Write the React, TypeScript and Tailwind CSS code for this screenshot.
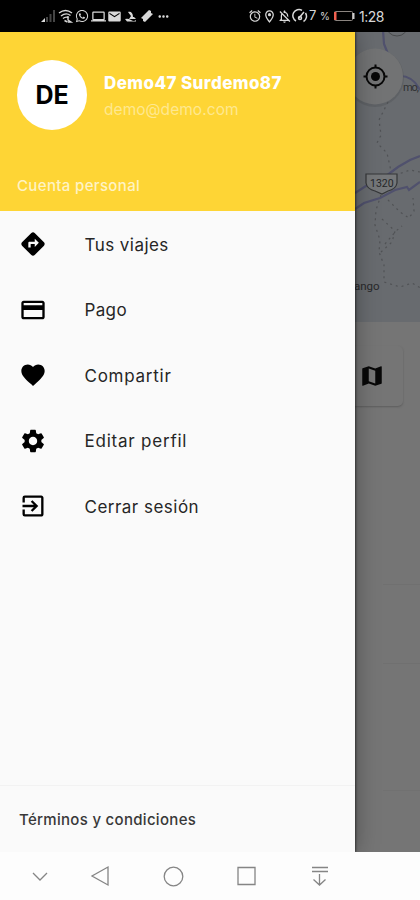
import React from "react";
import {
  MdDirections, MdPayment, MdFavorite, MdSettings, MdExitToApp, MdMap, MdEmail,
  MdAlarm, MdOutlineLocationOn, MdOutlineNotificationsOff, MdLaptop, MdMoreHoriz,
} from "react-icons/md";
import { FaWhatsapp } from "react-icons/fa";

const items = [
  { icon: MdDirections, label: "Tus viajes", tracking: "tracking-[0.45px]" },
  { icon: MdPayment, label: "Pago", tracking: "tracking-[0.35px]" },
  { icon: MdFavorite, label: "Compartir", tracking: "tracking-[0.75px]" },
  { icon: MdSettings, label: "Editar perfil", tracking: "tracking-[0.78px]" },
  { icon: MdExitToApp, label: "Cerrar sesión", tracking: "tracking-[0.48px]" },
];

function StatusBar() {
  return (
    <header className="flex h-8 shrink-0 items-center bg-black pl-[40px] text-[#d8d8d8]">
      <svg className="h-4 w-[16px]" viewBox="0 0 16 16">
        <path d="M1 14l4-4v4z" fill="#ddd" />
        <path d="M6 9h2v5H6zM9.500 6h2v8h-2zM13 2h2v12h-2z" fill="#454545" />
      </svg>
      <svg className="ml-[2px] h-4 w-4" viewBox="0 0 16 16" fill="none" stroke="currentColor" strokeWidth="1.4">
        <path d="M1 5q6.500-5 13 0M3 8q5-4 9.500-.5M5 10.500q3-2.500 6-.5M6.500 12.500l3 1.500M10 8v4l3 2-3 0" />
      </svg>
      <FaWhatsapp className="ml-[1px] size-[14px]" />
      <MdLaptop className="ml-[2px] size-[15px]" />
      <MdEmail className="ml-[1px] size-[15px]" />
      <svg className="ml-[3px] h-4 w-[12px]" viewBox="0 0 12 16" fill="currentColor">
        <path d="M3 4c3-1 5 1 5 5h1l2 2H4l2-3zM0 11q3-1 6 1t5 0v1.500H2z" />
      </svg>
      <svg className="ml-[3px] h-4 w-[14px]" viewBox="0 0 14 16" fill="currentColor">
        <path d="M1 10l8-8 2 1 0 2 2 1-8 8-2-1 0-2z" />
      </svg>
      <MdMoreHoriz className="ml-[2px] size-[15px]" />
      <div className="ml-[77px] flex items-center">
        <MdAlarm className="size-[14px]" />
        <MdOutlineLocationOn className="size-[15px]" />
        <MdOutlineNotificationsOff className="size-[15px]" />
        <svg className="h-4 w-4" viewBox="0 0 16 16" fill="none" stroke="currentColor" strokeWidth="1.500">
          <path d="M4 13A6 6 0 0 1 10 2.300M13.500 5a6 6 0 0 1-2 8.500M7 10l5-6" />
          <circle cx="8" cy="10" r="1.500" />
        </svg>
        <span className="ml-px w-[11px] text-[13px]">7</span>
        <span className="w-[12px] text-[10px]">%</span>
        <svg className="h-3 w-[24px]" viewBox="0 0 24 12">
          <rect x="2.500" y="1.500" width="18" height="9" rx="1" fill="none" stroke="#8b8580" />
          <path d="M2 2h2.500v8H2z" fill="#ef604f" />
          <path d="M21.500 3v6" stroke="#ccc" strokeWidth="2" />
        </svg>
        <span className="ml-[3px] text-[14px] tracking-[-0.5px]">1:28</span>
      </div>
    </header>
  );
}

function Drawer() {
  return (
    <aside className="relative z-10 flex w-[355px] shrink-0 flex-col bg-[#fafafa] shadow-[0_0_22px_rgba(0,0,0,0.35),1px_0_2px_rgba(0,0,0,0.5)]">
      <div className="flex h-[179px] shrink-0 flex-col bg-[#fed535] text-white">
        <div className="flex h-[126px] items-center pl-[17px]">
          <div className="flex size-[70px] items-center justify-center rounded-full bg-white pt-[2px] text-[25px] font-bold text-black">DE</div>
          <div className="ml-[17px] flex flex-col pt-[3px]">
            <span className="text-[17px] leading-[26px] font-extrabold tracking-[0.400px]">Demo47 Surdemo87</span>
            <span className="text-[15.500px] leading-[27px] tracking-[0.050px] text-[#ffe88f]">demo@demo.com</span>
          </div>
        </div>
        <div className="flex h-[53px] items-center pt-[3px] pl-[17px] text-[15px] font-medium tracking-[0.350px] text-[#fff3c4]">Cuenta personal</div>
      </div>
      <nav className="flex flex-1 flex-col pt-[0.500px]">
        {items.map(({ icon: Icon, label, tracking }) => (
          <div key={label} className="flex h-[65.500px] items-center pl-[19px]">
            <Icon className="size-[28px] text-black" />
            <span className={`ml-[37.500px] pt-[2px] text-[17px] text-[#262626] ${tracking}`}>{label}</span>
          </div>
        ))}
      </nav>
      <footer className="flex h-[67px] items-center border-t border-[#f2f2f2] pt-[2px] pl-[19px] text-[15px] font-medium tracking-[0.300px] text-[#383838]">
        Términos y condiciones
      </footer>
    </aside>
  );
}

function MapPanel() {
  return (
    <svg className="h-[290px] w-[65px] shrink-0 bg-[#686b6f]" viewBox="0 0 65 290" fill="none">
      <path d="M28-2l1 14 4 10M0 63l8-5M45 44q13 0 20 14M0 60l10-6 10-8M65 124l-10 4-12 7-12 9M14 152l-14 9M0 177l9-6 16-5 15-8 12-3 2 3 11-8" stroke="#50516d" strokeWidth="2.200" />
      <path d="M33 70l-9 18 2 15-4 8 10 10 4 18M65 140l-10-2-14 5M26 163l-5 15-1 15 5 15-1 12 5 13 0 17 16 5 12-4 12 7M33 168l12 12 9 6 5-7-1-13M27 187l13 12-3 11-11 10M30 212l11-13 6-5" stroke="#505255" strokeWidth="1.200" strokeDasharray="2 4" />
      <circle cx="42" cy="-7" r="11" stroke="#484a4c" />
      <circle cx="20" cy="46" r="29" fill="#4e5052" opacity=".35" />
      <circle cx="20" cy="44.500" r="28" fill="#727374" />
      <g stroke="#080808" strokeWidth="2">
        <circle cx="20.500" cy="44.500" r="9" />
        <circle cx="20.500" cy="44.500" r="4.500" fill="#080808" stroke="none" />
        <path d="M20.500 32.500v3M20.500 53.500v3M8.500 44.500h3M29.500 44.500h3" />
      </g>
      <text x="48" y="59" fill="#2e3032" fontSize="11" textLength="16" fontFamily="Roboto, sans-serif">mo,</text>
      <path d="M11 142h31v9q-1 6-9 8l-6 3-7-3q-8-2-9-8z" fill="#757779" stroke="#343638" strokeWidth="1.200" />
      <text x="15" y="155" fill="#242628" fontSize="10.500" fontFamily="Roboto, sans-serif">1320</text>
      <text x="-1" y="258" fill="#28292b" fontSize="11.500" fontFamily="Roboto, sans-serif">ango</text>
    </svg>
  );
}

function Background() {
  return (
    <main className="flex w-[65px] flex-col bg-[#757575]">
      <MapPanel />
      <section className="flex flex-1 flex-col">
        <div className="mt-[24px] flex h-[60px] w-[48px] items-center rounded-r-[5px] bg-[#757575] pl-[4px] shadow-[0_1px_2px_#5d5d5d]">
          <MdMap className="size-[26px] text-[#080808]" />
        </div>
        <div className="ml-[28px] mt-[178px] h-[80px] border-y border-[#707070]" />
        <div className="ml-[28px] mt-[126px] h-px bg-[#717171]" />
      </section>
    </main>
  );
}

function NavigationBar() {
  return (
    <footer className="flex h-12 shrink-0 bg-[#fdfdfd]">
      <svg className="h-12 w-[355px]" viewBox="0 0 355 48" fill="none" stroke="#858585" strokeWidth="1.300">
        <path d="M33 21l7 7 7-7M108 15v18l-16-9zM238 15.500h17v17h-17z" />
        <circle cx="173.500" cy="24.500" r="9.300" />
        <path d="M312 15.500h16M312 19.500h16M319.500 22v11M313.500 27.500l6 5.500 6-5.500" />
      </svg>
    </footer>
  );
}

export default function App() {
  return (
    <div className="flex h-[900px] w-[420px] flex-col overflow-hidden bg-[#fdfdfd] font-[Inter,Roboto,sans-serif]">
      <StatusBar />
      <div className="flex h-[820px] shrink-0 overflow-hidden">
        <Drawer />
        <Background />
      </div>
      <NavigationBar />
    </div>
  );
}
